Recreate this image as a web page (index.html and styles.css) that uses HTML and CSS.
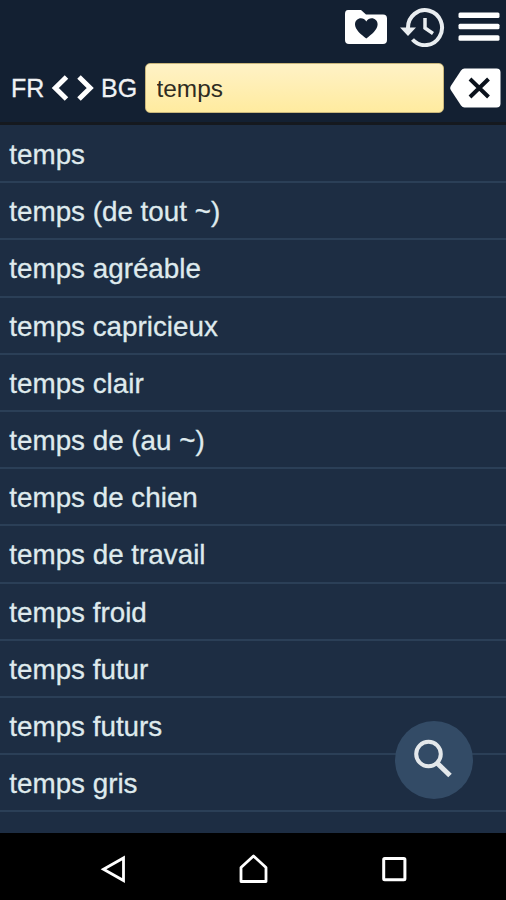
FILE: index.html
```html
<!DOCTYPE html>
<html lang="fr">
<head>
<meta charset="utf-8">
<title>FR - BG</title>
<link rel="stylesheet" href="styles.css">
</head>
<body>
<div class="app">
  <header class="header">
    <div class="toolbar">
      <svg class="icon-folder" width="44" height="36" viewBox="0 0 44 36">
        <path fill="#fff" d="M4 1h13l5 4.500H39q4 0 4 4V31q0 4-4 4H5q-4 0-4-4V5q0-4 3-4z"/>
        <path fill="#132032" d="M22.300 29.500C17 25.500 11 20.500 11 15.500c0-6.500 8-8.500 11.300-3 3.300-5.500 11.300-3.500 11.300 3 0 5-6 10-11.300 14z"/>
      </svg>
      <svg class="icon-history" width="46" height="40" viewBox="0 0 46 40">
        <path fill="none" stroke="#e9edf0" stroke-width="4" d="M9 21A17 17.500 0 1 1 13.500 32.500"/>
        <path fill="#e9edf0" d="M1 20.500h16L9 29z"/>
        <path fill="none" stroke="#e9edf0" stroke-width="3.500" d="M26 11v10l8 5.500"/>
      </svg>
      <svg class="icon-menu" width="42" height="32" viewBox="0 0 42 32">
        <g fill="#fff">
          <rect x=".5" y="1.500" width="41" height="5.500" rx="1.500"/>
          <rect x=".5" y="12.700" width="41" height="5.500" rx="1.500"/>
          <rect x=".5" y="24.200" width="41" height="5.500" rx="1.500"/>
        </g>
      </svg>
    </div>
    <div class="search">
      <span class="lang lang-from">FR</span>
      <svg class="swap" width="44" height="28" viewBox="0 0 44 28">
        <path fill="none" stroke="#fff" stroke-width="5" d="M15.500 3L4.300 14 15.500 25M28 3L39.200 14 28 25"/>
      </svg>
      <span class="lang">BG</span>
      <input class="field" type="text" value="temps">
      <svg class="clear" width="52" height="40" viewBox="0 0 52 40">
        <path fill="#fff" d="M14.500 .5h32q4 0 4 4v31q0 4-4 4h-32q-2 0-3.500-2L.8 22q-1.200-2 0-4L11 2.500q1.500-2 3.500-2z"/>
        <path stroke="#0b121c" stroke-width="4" d="M20 11l18.500 18M38.500 11L20 29"/>
      </svg>
    </div>
  </header>
  <main class="results">
    <ul class="list">
      <li class="row">temps</li>
      <li class="row">temps (de tout ~)</li>
      <li class="row">temps agréable</li>
      <li class="row">temps capricieux</li>
      <li class="row">temps clair</li>
      <li class="row">temps de (au ~)</li>
      <li class="row">temps de chien</li>
      <li class="row">temps de travail</li>
      <li class="row">temps froid</li>
      <li class="row">temps futur</li>
      <li class="row">temps futurs</li>
      <li class="row">temps gris</li>
    </ul>
    <button class="fab" aria-label="Rechercher">
      <svg width="78" height="78" viewBox="0 0 78 78">
        <circle cx="33.500" cy="33" r="12.300" fill="none" stroke="#e4e8eb" stroke-width="4"/>
        <path stroke="#e4e8eb" stroke-width="5" d="M42 42l13 12.500"/>
      </svg>
    </button>
  </main>
  <nav class="navbar">
    <svg width="28" height="30" viewBox="0 0 28 30">
      <path fill="none" stroke="#fff" stroke-width="2.800" d="M24.500 4v22.500L4.500 15.200z"/>
    </svg>
    <svg width="30" height="30" viewBox="0 0 30 30">
      <path fill="none" stroke="#fff" stroke-width="2.800" stroke-linejoin="round" d="M2 13.500L14.500 2 27 13.500v14H2z"/>
    </svg>
    <svg width="26" height="26" viewBox="0 0 26 26">
      <rect x="2.700" y="2.500" width="21.200" height="21.200" rx="1" fill="none" stroke="#fff" stroke-width="3"/>
    </svg>
  </nav>
</div>
</body>
</html>
```
FILE: styles.css
```css
* {
  box-sizing: border-box;
}

body {
  margin: 0;
  font-family: "Liberation Sans", Arial, sans-serif;
  background: #000;
}

svg {
  display: block;
  flex: none;
}

.app {
  display: flex;
  flex-direction: column;
  width: 506px;
  height: 900px;
  overflow: hidden;
}

.header {
  height: 125px;
  background: #132032;
  border-bottom: 3px solid #15191f;
}

.toolbar {
  display: flex;
  justify-content: flex-end;
  align-items: center;
  height: 54px;
  padding-right: 6px;
}

.icon-history {
  margin: 0 13px 0 11px;
}

.icon-menu {
  margin-top: -1px;
}

.search {
  display: flex;
  align-items: center;
  height: 68px;
  padding: 0 4px 0 11px;
}

.lang {
  flex: none;
  width: 38px;
  font-size: 25px;
  line-height: 28px;
  color: #f0f2f4;
  -webkit-text-stroke: 0.3px #f0f2f4;
}

.lang-from {
  width: 34px;
}

.swap {
  margin: 0 6px;
}

.field {
  flex: none;
  width: 299px;
  height: 50px;
  margin: 0 6px;
  padding: 2px 11px 0 10.500px;
  border: 1px solid #c9b67b;
  border-radius: 5px;
  background: linear-gradient(#fff2c6, #ffeb9f);
  font-family: inherit;
  font-size: 24.400px;
  color: #2f2c22;
  outline: none;
}

.results {
  position: relative;
  height: 708px;
  background: #1d2d43;
}

.list {
  margin: 0;
  padding: 1px 0 0;
  list-style: none;
}

.row {
  height: 57.200px;
  padding: 2px 0 0 9.300px;
  border-bottom: 2px solid #2b3f57;
  font-size: 27.800px;
  line-height: 54px;
  color: #dfeaed;
  -webkit-text-stroke: 0.3px #dfeaed;
  white-space: nowrap;
}

.fab {
  position: absolute;
  right: 33px;
  bottom: 34px;
  width: 78px;
  height: 78px;
  padding: 0;
  border: 0;
  border-radius: 50%;
  background: #334b66;
}

.navbar {
  display: flex;
  justify-content: space-between;
  align-items: center;
  height: 67px;
  padding: 4px 99px 0;
  background: #000;
}
```
